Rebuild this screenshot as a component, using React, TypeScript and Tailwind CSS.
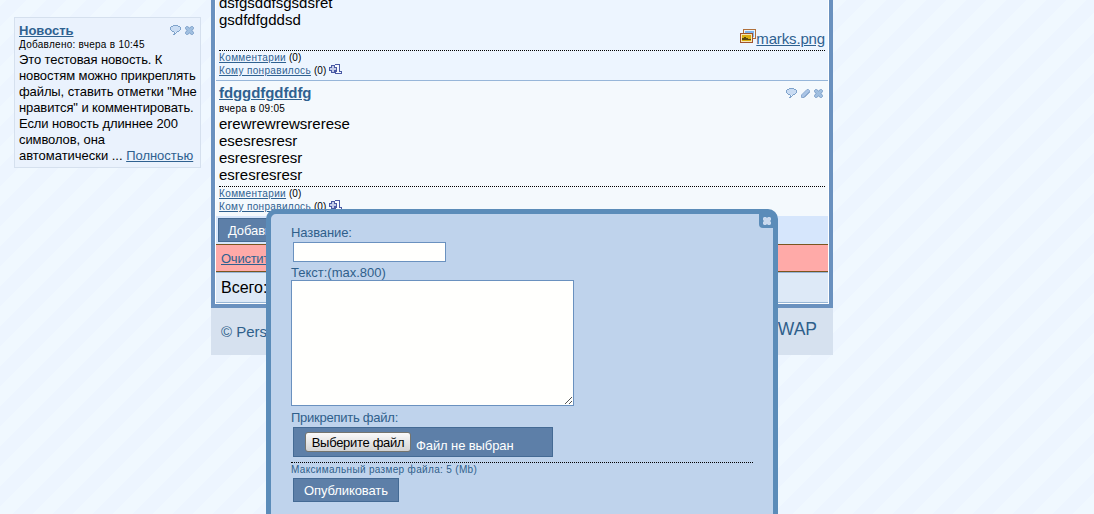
import { useState } from 'react';
import type { ReactNode } from 'react';

function CommentIcon() {
  return (
    <svg width="11" height="10" viewBox="0 0 11 10" shapeRendering="crispEdges">
      <path d="M3 1h5v1h2v3h-1v1h-2v1h-2v1h-1v-1h-1v-1h-1v-1h-1v-3h2z" fill="#c9dcf3" />
      <path
        d="M3 0h5v1h-5zM1 1h2v1h-2zM8 1h2v1h-2zM0 2h1v3h-1zM10 2h1v3h-1zM1 5h1v1h-1zM9 5h1v1h-1zM2 6h2v1h-2zM7 6h2v1h-2zM4 7h1v1h-1zM6 7h1v1h-1zM4 8h2v1h-2zM3 9h2v1h-2z"
        fill="#7fa3cb"
      />
    </svg>
  );
}

function PencilIcon() {
  return (
    <svg width="9" height="9" viewBox="0 0 9 9">
      <path d="M.5 8.5v-2.500l5.500-5.500h1.500l1 1v1.500l-5.500 5.500z" fill="#a9c4e6" stroke="#8eacd0" />
      <path d="M3 8.500l5.500-5.500" stroke="#7093bd" />
    </svg>
  );
}

function CrossIcon() {
  return (
    <svg width="9" height="9" viewBox="0 0 9 9">
      <path
        d="M1.500.5h1l2 1.500 2-1.500h1l1 1v1l-1.500 2 1.500 2v1l-1 1h-1l-2-1.500-2 1.500h-1l-1-1v-1l1.500-2-1.500-2v-1z"
        fill="#a0bfe0"
        stroke="#7c9fc8"
      />
    </svg>
  );
}

function PlusOneIcon() {
  return (
    <svg width="13" height="10" viewBox="0 0 13 10" shapeRendering="crispEdges">
      <path d="M5 0h6v7h2v3h-7v-10z" fill="#4a5aa5" />
      <path d="M6 1h4v7h2v1h-5v-1h1v-5h-2z" fill="#f7f9ff" />
      <path d="M2 1h4v2h2v4h-2v2h-4v-2h-2v-4h2z" fill="#4a5aa5" />
      <path d="M3 2h2v2h2v2h-2v2h-2v-2h-2v-2h2z" fill="#c3cbe8" />
    </svg>
  );
}

function PicturesIcon() {
  return (
    <svg width="16" height="14" viewBox="0 0 16 14" shapeRendering="crispEdges">
      <path d="M3 0h13v10h-13z" fill="#b0703c" />
      <path d="M4 1h11v8h-11z" fill="#e8f3fd" />
      <path d="M5 2h9v6h-9z" fill="#7db4ee" />
      <path d="M0 4h13v10h-13z" fill="#a0522d" />
      <path d="M1 5h11v8h-11z" fill="#f6e7b8" />
      <path d="M2 6h9v6h-9z" fill="#d9ad10" />
      <path d="M2 9h2v-1h2v1h2v1h3v1h-9z" fill="#5c4a10" />
    </svg>
  );
}

function Likes() {
  return (
    <div className="border-t border-dotted border-black text-[10px] leading-[13px]">
      <div className="flex">
        <a href="#" className="w-[67px] whitespace-nowrap tracking-[0.37px] text-[#2f6190] underline">Комментарии</a>
        <span className="ml-[3px]">(0)</span>
      </div>
      <div className="flex">
        <a href="#" className="w-[92px] whitespace-nowrap tracking-[0.35px] text-[#2f6190] underline">Кому понравилось</a>
        <span className="ml-[3px] mr-[3px]">(0)</span>
        <PlusOneIcon />
      </div>
    </div>
  );
}

function ActionButton({ children, className }: { children: ReactNode; className?: string }) {
  return (
    <button
      className={`h-6 whitespace-nowrap border border-[#446a94] bg-[#5d7fa8] text-[13px] leading-[24px] tracking-[-0.1px] text-white ${className ?? ''}`}
    >
      {children}
    </button>
  );
}

function NewsCard() {
  return (
    <aside className="ml-[14px] mt-[17px] h-[151px] w-[187px] shrink-0 border border-[#d5e0ee] bg-[#eaf2fd] px-1 pt-[5px]">
      <div className="flex h-4 items-start justify-between">
        <a href="#" className="text-[13px] font-bold leading-4 text-[#2f6190] underline">Новость</a>
        <div className="mr-[2px] flex items-end gap-1 pt-[2px]">
          <CommentIcon />
          <CrossIcon />
        </div>
      </div>
      <p className="h-[13px] whitespace-nowrap text-[10px] leading-[12px] tracking-[0.27px]">Добавлено: вчера в 10:45</p>
      <p className="whitespace-nowrap text-[13px] leading-4 tracking-[-0.1px]">
        Это тестовая новость. К<br />
        новостям можно прикреплять<br />
        файлы, ставить отметки "Мне<br />
        нравится" и комментировать.<br />
        Если новость длиннее 200<br />
        символов, она<br />
        <span className="tracking-[-0.02px]">
          автоматически ... <a href="#" className="text-[#2f6190] underline">Полностью</a>
        </span>
      </p>
    </aside>
  );
}

function Feed() {
  return (
    <main className="ml-[10px] h-[355px] w-[622px] shrink-0 bg-[#d6e1ef]">
      <div className="h-[308px] overflow-hidden border-x-4 border-b-4 border-[#6a91bf] bg-white px-px pb-px">
        <article className="flow-root h-[81px] border-b border-[#97b6d9] bg-[#edf5ff] px-[3px]">
          <div className="-mt-[6px] h-[34px] text-[15px] leading-[17px]">
            dsfgsddfsgsdsret<br />
            gsdfdfgddsd
          </div>
          <div className="flex h-[22px] items-start justify-end pt-px">
            <PicturesIcon />
            <a href="#" className="mt-px text-[15px] leading-[17px] tracking-[-0.15px] text-[#2f6190] underline">marks.png</a>
          </div>
          <Likes />
        </article>
        <article className="h-[135px] bg-[#f4f9fd] px-[3px] pt-[3px]">
          <div className="flex h-[18px] items-start justify-between">
            <a href="#" className="text-[15px] font-bold leading-[17px] tracking-[-0.07px] text-[#2f6190] underline">fdggdfgdfdfg</a>
            <div className="mr-[2px] flex items-end gap-1 pt-1">
              <CommentIcon />
              <PencilIcon />
              <CrossIcon />
            </div>
          </div>
          <p className="h-[13px] text-[10px] leading-[13px] tracking-[0.27px]">вчера в 09:05</p>
          <div className="h-[71px] text-[15px] leading-[17px]">
            erewrewrewsrerese<br />
            esesresresr<br />
            esresresresr<br />
            esresresresr
          </div>
          <Likes />
        </article>
        <div className="h-7 bg-[#d6e6fc] px-[2px] pt-[2px]">
          <ActionButton className="px-[9px]">Добавить</ActionButton>
        </div>
        <div className="h-7 border-y border-[#7a5520] bg-[#ffaaa8] px-[5px] text-[13px] leading-[27px]">
          <a href="#" className="tracking-[-0.25px] text-[#2f6190] underline">Очистить</a>
        </div>
        <div className="h-[31px] border-y border-[#97b6d6] bg-[#dde9f7] px-[5px] text-[16px] leading-[29px]">
          Всего: 2
        </div>
      </div>
      <footer className="flex h-[47px] justify-between pl-[10px] pr-[16px] text-[#2f5f8b]">
        <span className="text-[15px] leading-[47px]">© Personal</span>
        <span className="text-[17.5px] leading-[42px]">WAP</span>
      </footer>
    </main>
  );
}

function PublishDialog({ onClose }: { onClose: () => void }) {
  const [title, setTitle] = useState('');
  const [text, setText] = useState('');

  return (
    <div className="absolute left-[266px] top-[209px] h-[330px] w-[512px] rounded-[10px] border-[5px] border-[#5b8cb9] bg-[#bfd3ec] px-5 pt-[10px] text-[13px] leading-4 text-[#2f5f8b]">
      <button
        onClick={onClose}
        className="absolute right-0 top-0 flex h-[14px] w-[14px] items-center justify-center rounded-bl-[4px] bg-[#5b8cb9]"
      >
        <svg className="ml-px -mt-px" width="8" height="8" viewBox="0 0 8 8">
          <path d="M1 0h2l1 1 1-1h2l1 1v2l-1 1 1 1v2l-1 1h-2l-1-1-1 1h-2l-1-1v-2l1-1-1-1v-2z" fill="#c9d9ee" />
        </svg>
      </button>
      <div className="h-[18px] pt-px tracking-[-0.1px]">Название:</div>
      <input
        value={title}
        onChange={(e) => setTitle(e.target.value)}
        className="ml-[2px] block h-5 w-[153px] border border-[#6a91bf] bg-[#fffffd] px-1"
      />
      <div className="h-[18px] pt-[3px]">Текст:(max.800)</div>
      <div className="relative h-[126px] w-[283px]">
        <textarea
          value={text}
          onChange={(e) => setText(e.target.value)}
          className="block h-full w-full resize-none border border-[#6a91bf] bg-[#fffffd] p-1"
        />
        <svg className="absolute bottom-[2px] right-[2px]" width="7" height="7" viewBox="0 0 7 7">
          <path d="M0 7L7 0M4 7L7 4" stroke="#555" />
        </svg>
      </div>
      <div className="h-[21px] pt-1 tracking-[-0.25px]">Прикрепить файл:</div>
      <div className="ml-[2px] flex h-[30px] w-[260px] border border-[#446a94] bg-[#5d7fa8] pl-[11px] pt-1">
        <button className="h-[20px] w-[106px] whitespace-nowrap rounded-[3px] border border-[#75756f] bg-linear-to-b from-[#fafafa] to-[#d3d3d3] text-[13px] leading-[19px] tracking-[-0.3px] text-black">
          Выберите файл
        </button>
        <span className="ml-[5px] mt-[6px] tracking-[-0.1px] text-white">Файл не выбран</span>
      </div>
      <div className="mt-[5px] h-[16px] w-[462px] border-t border-dotted border-black text-[10px] leading-[14px] tracking-[0.33px]">
        Максимальный размер файла: 5 (Mb)
      </div>
      <ActionButton className="ml-[2px] w-[106px]">Опубликовать</ActionButton>
    </div>
  );
}

export default function App() {
  const [open, setOpen] = useState(true);

  return (
    <div className="relative flex h-[514px] w-[1094px] items-start overflow-hidden bg-[linear-gradient(135deg,#f0f8ff_8.75%,#edf5ff_8.75%,#edf5ff_33.75%,#f0f8ff_33.75%,#f0f8ff_58.75%,#edf5ff_58.75%,#edf5ff_83.75%,#f0f8ff_83.75%)] bg-[length:40px_40px] font-['Liberation_Sans',Arial,sans-serif] text-black">
      <NewsCard />
      <Feed />
      {open && <PublishDialog onClose={() => setOpen(false)} />}
    </div>
  );
}
